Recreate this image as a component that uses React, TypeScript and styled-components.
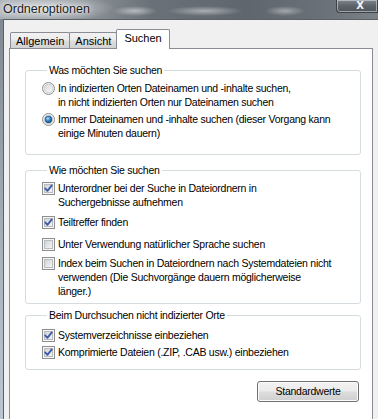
import React, { useId } from 'react';
import styled, { createGlobalStyle } from 'styled-components';

const GlobalStyle = createGlobalStyle`
  html, body {
    margin: 0;
    padding: 0;
  }
  body {
    font-family: "Liberation Sans", Arial, sans-serif;
    font-size: 10.5px;
    letter-spacing: -0.25px;
    color: #000;
    background: #9aa3ab;
  }
`;

const Window = styled.div`
  width: 378px;
  height: 419px;
  overflow: hidden;
  display: flex;
  flex-direction: column;
  background: linear-gradient(180deg, #7d858d 0%, #a7b2bd 60%, #b9c6d2 100%);
`;

const TitleBar = styled.div`
  height: 19px;
  flex-shrink: 0;
  display: flex;
  align-items: flex-start;
  background:
    radial-gradient(ellipse 22px 5px at 135px 11px, rgba(235, 240, 245, 0.55), transparent),
    radial-gradient(ellipse 38px 5px at 205px 11px, rgba(235, 240, 245, 0.5), transparent),
    radial-gradient(ellipse 20px 5px at 285px 11px, rgba(235, 240, 245, 0.45), transparent),
    radial-gradient(ellipse 70px 14px at 45px 8px, rgba(225, 228, 230, 0.85), transparent),
    linear-gradient(90deg, #a8aeb3 0%, #8c9399 22%, #6a7178 40%, #5f666d 65%, #697077 85%, #7a8187 100%);
`;

const TitleText = styled.div`
  padding: 2px 0 0 3px;
  font-size: 12.5px;
  letter-spacing: 0;
  line-height: 15px;
  color: #1c1c1c;
  text-shadow: 0 0 6px rgba(255, 255, 255, 0.9), 0 0 2px rgba(255, 255, 255, 0.8);
`;

const CloseButton = styled.div`
  margin-left: auto;
  width: 42px;
  height: 13px;
  box-sizing: border-box;
  border: 1px solid #3d4248;
  border-top: none;
  border-radius: 0 0 0 4px;
  box-shadow: inset 0 0 0 1px rgba(220, 226, 232, 0.55);
  background: linear-gradient(180deg, #80868c 0%, #5d636a 50%, #4f555c 100%);
  color: #f2f4f6;
  font-family: "DejaVu Sans", sans-serif;
  font-weight: bold;
  font-size: 10px;
  letter-spacing: 0;
  line-height: 11px;
  text-align: center;
  padding-left: 6px;
`;

const Body = styled.div`
  flex: 1;
  margin-left: 3px;
  border-left: 1px solid #5b6167;
  border-top: 1px solid #5b6167;
  background: #f0f0f0;
  padding: 9px 5px 0 5px;
  display: flex;
  flex-direction: column;
`;

const TabStrip = styled.div`
  display: flex;
  align-items: flex-end;
  height: 20px;
  padding-left: 1px;
  margin-bottom: -1px;
  position: relative;
  z-index: 1;
`;

const Tab = styled.div<{ $active?: boolean }>`
  box-sizing: border-box;
  height: ${(p) => (p.$active ? '20px' : '16px')};
  margin-bottom: ${(p) => (p.$active ? '0' : '1px')};
  margin-right: -1px;
  padding: ${(p) => (p.$active ? '1px 7px 0 7px' : '1px 5px 0 5px')};
  border: 1px solid #898c95;
  border-bottom: none;
  border-radius: 2px 2px 0 0;
  background: ${(p) =>
    p.$active ? '#ffffff' : 'linear-gradient(180deg, #f2f2f2 0%, #ebebeb 45%, #dddddd 55%, #d2d2d2 100%)'};
  font-size: 11px;
  letter-spacing: 0;
  line-height: 14px;
  position: relative;
  z-index: ${(p) => (p.$active ? 2 : 1)};
`;

const Panel = styled.div`
  height: 400px;
  border: 1px solid #898c95;
  background: #ffffff;
  padding: 14px 11px 0 15px;
  display: flex;
  flex-direction: column;
`;

const Group = styled.fieldset<{ $gapTop?: number; $padTop: number; $padBottom: number }>`
  margin: ${(p) => p.$gapTop ?? 0}px 0 0 0;
  padding: ${(p) => p.$padTop}px 0 ${(p) => p.$padBottom}px 16px;
  border: 1px solid #d5dcdf;
  border-radius: 3px;
  min-width: 0;
  display: flex;
  flex-direction: column;
`;

const Legend = styled.legend`
  margin-left: 5px;
  padding: 0 2px;
  line-height: 14px;
`;

const Row = styled.label<{ $gap?: number }>`
  display: flex;
  align-items: flex-start;
  margin-top: ${(p) => p.$gap ?? 0}px;
  line-height: 14px;
  white-space: nowrap;
`;

const Mark = styled.span`
  flex-shrink: 0;
  width: 13px;
  height: 13px;
  margin-top: 1px;
  margin-right: 3px;
  display: flex;
`;

const ButtonRow = styled.div`
  display: flex;
  justify-content: flex-end;
  margin-top: 11px;
  padding-right: 2px;
`;

const Button = styled.div`
  box-sizing: border-box;
  width: 102px;
  height: 21px;
  border: 1px solid #707070;
  border-radius: 3px;
  box-shadow: inset 0 0 0 1px #fcfcfc;
  background: linear-gradient(180deg, #f2f2f2 0%, #ebebeb 48%, #dddddd 52%, #cfcfcf 100%);
  text-align: center;
  line-height: 19px;
`;

const Radio = ({ checked }: { checked?: boolean }) => {
  const id = useId().replace(/:/g, '');
  return (
    <svg width="13" height="13" viewBox="0 0 13 13">
      <defs>
        <linearGradient id={`rb${id}`} x1="0" y1="0" x2="1" y2="1">
          <stop offset="0" stopColor="#d4d6d8" />
          <stop offset="1" stopColor="#fbfbfb" />
        </linearGradient>
        <radialGradient id={`rd${id}`} cx="0.4" cy="0.35" r="0.7">
          <stop offset="0" stopColor="#b6e3ff" />
          <stop offset="0.45" stopColor="#3a8ccb" />
          <stop offset="1" stopColor="#0d3f72" />
        </radialGradient>
      </defs>
      <circle cx="6.5" cy="6.5" r="6" fill="#f4f4f4" stroke="#8e8f8f" />
      <circle cx="6.5" cy="6.5" r="4.3" fill={`url(#rb${id})`} stroke="#c4c7ca" strokeWidth="0.8" />
      {checked && <circle cx="6.5" cy="6.5" r="3.4" fill={`url(#rd${id})`} stroke="#1b4c7e" strokeWidth="0.6" />}
    </svg>
  );
};

const Check = ({ checked }: { checked?: boolean }) => {
  const id = useId().replace(/:/g, '');
  return (
    <svg width="13" height="13" viewBox="0 0 13 13">
      <defs>
        <linearGradient id={`cb${id}`} x1="0" y1="0" x2="1" y2="1">
          <stop offset="0" stopColor="#cfd1d4" />
          <stop offset="1" stopColor="#f7f7f7" />
        </linearGradient>
      </defs>
      <rect x="0.5" y="0.5" width="12" height="12" fill="#f6f6f6" stroke="#8e8f8f" />
      <rect x="2.5" y="2.5" width="8" height="8" fill={`url(#cb${id})`} stroke="#b8bbbf" />
      {checked && (
        <path d="M3.2 6.4 L5.4 8.8 L9.8 3.4" fill="none" stroke="#3f5da8" strokeWidth="1.9" strokeLinecap="round" strokeLinejoin="round" />
      )}
    </svg>
  );
};

const App: React.FC = () => {
  return (
    <>
      <GlobalStyle />
      <Window>
        <TitleBar>
          <TitleText>Ordneroptionen</TitleText>
          <CloseButton>X</CloseButton>
        </TitleBar>
        <Body>
          <TabStrip>
            <Tab>Allgemein</Tab>
            <Tab>Ansicht</Tab>
            <Tab $active>Suchen</Tab>
          </TabStrip>
          <Panel>
            <Group $padTop={4} $padBottom={14}>
              <Legend>Was möchten Sie suchen</Legend>
              <Row>
                <Mark><Radio /></Mark>
                <span>
                  In indizierten Orten Dateinamen und -inhalte suchen,
                  <br />
                  in nicht indizierten Orten nur Dateinamen suchen
                </span>
              </Row>
              <Row $gap={3}>
                <Mark><Radio checked /></Mark>
                <span>
                  Immer Dateinamen und -inhalte suchen (dieser Vorgang kann
                  <br />
                  einige Minuten dauern)
                </span>
              </Row>
            </Group>
            <Group $gapTop={8} $padTop={4} $padBottom={5}>
              <Legend>Wie möchten Sie suchen</Legend>
              <Row>
                <Mark><Check checked /></Mark>
                <span>
                  Unterordner bei der Suche in Dateiordnern in
                  <br />
                  Suchergebnisse aufnehmen
                </span>
              </Row>
              <Row $gap={6}>
                <Mark><Check checked /></Mark>
                <span>Teiltreffer finden</span>
              </Row>
              <Row $gap={8}>
                <Mark><Check /></Mark>
                <span>Unter Verwendung natürlicher Sprache suchen</span>
              </Row>
              <Row $gap={5}>
                <Mark><Check /></Mark>
                <span>
                  Index beim Suchen in Dateiordnern nach Systemdateien nicht
                  <br />
                  verwenden (Die Suchvorgänge dauern möglicherweise
                  <br />
                  länger.)
                </span>
              </Row>
            </Group>
            <Group $gapTop={4} $padTop={6} $padBottom={10}>
              <Legend>Beim Durchsuchen nicht indizierter Orte</Legend>
              <Row>
                <Mark><Check checked /></Mark>
                <span>Systemverzeichnisse einbeziehen</span>
              </Row>
              <Row $gap={3}>
                <Mark><Check checked /></Mark>
                <span>Komprimierte Dateien (.ZIP, .CAB usw.) einbeziehen</span>
              </Row>
            </Group>
            <ButtonRow>
              <Button>Standardwerte</Button>
            </ButtonRow>
          </Panel>
        </Body>
      </Window>
    </>
  );
};

export default App;
